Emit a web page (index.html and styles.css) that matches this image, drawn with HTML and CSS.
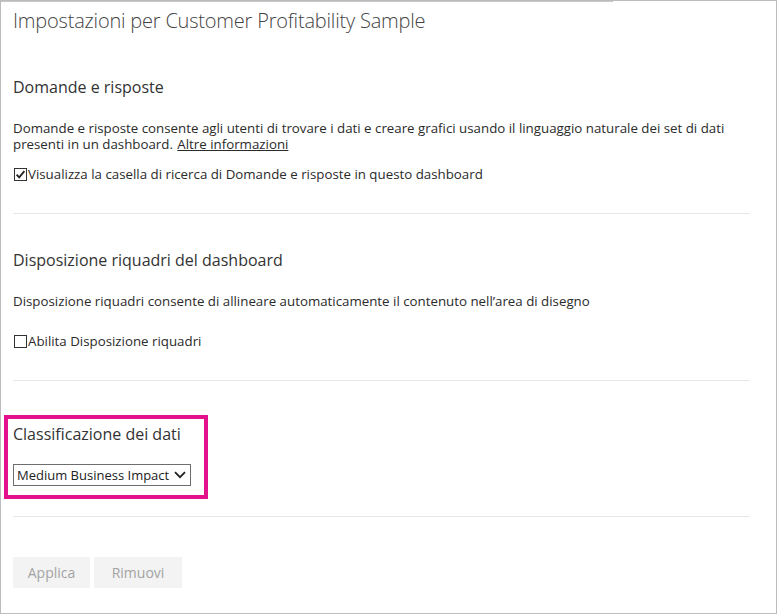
FILE: index.html
```html
<!DOCTYPE html>
<html lang="it">
<head>
<meta charset="utf-8">
<title>Impostazioni</title>
<link rel="stylesheet" href="styles.css">
</head>
<body>
<div class="frame">
  <h1 class="title">Impostazioni per Customer Profitability Sample</h1>

  <section class="section s1">
    <h2 class="heading">Domande e risposte</h2>
    <p class="para">Domande e risposte consente agli utenti di trovare i dati e creare grafici usando il linguaggio naturale dei set di dati presenti in un dashboard. <a class="link" href="#">Altre informazioni</a></p>
    <label class="check">
      <svg class="box" width="13" height="13" viewBox="0 0 13 13"><rect x="0.5" y="0.5" width="12" height="12" fill="#fff" stroke="#333"/><path d="M2.6 6.6 L5.2 9.4 L10.4 3.2" fill="none" stroke="#222" stroke-width="1.8"/></svg>
      <span>Visualizza la casella di ricerca di Domande e risposte in questo dashboard</span>
    </label>
  </section>
  <hr class="divider">

  <section class="section s2">
    <h2 class="heading">Disposizione riquadri del dashboard</h2>
    <p class="para p2">Disposizione riquadri consente di allineare automaticamente il contenuto nell’area di disegno</p>
    <label class="check c2">
      <svg class="box" width="13" height="13" viewBox="0 0 13 13"><rect x="0.5" y="0.5" width="12" height="12" fill="#fff" stroke="#333"/></svg>
      <span>Abilita Disposizione riquadri</span>
    </label>
  </section>
  <hr class="divider d2">

  <div class="highlight">
    <h2 class="heading h3">Classificazione dei dati</h2>
    <div class="select">
      <span>Medium Business Impact</span>
      <svg class="chev" width="12" height="8" viewBox="0 0 12 8"><path d="M1 1.2 L6 6.2 L11 1.2" fill="none" stroke="#222" stroke-width="1.8"/></svg>
    </div>
  </div>
  <hr class="divider d3">

  <div class="buttons">
    <button class="btn b1">Applica</button>
    <button class="btn b2">Rimuovi</button>
  </div>
</div>
</body>
</html>
```
FILE: styles.css
```css
* { box-sizing: border-box; }
html, body { margin: 0; padding: 0; background: #fff; }
body {
  font-family: "Open Sans", "Liberation Sans", sans-serif;
  color: #333;
}
.frame {
  position: relative;
  width: 777px;
  height: 614px;
  border: 1px solid #bcbcbc;
  padding: 6px 26px 0 12px;
  overflow: hidden;
}
.frame::before {
  content: "";
  position: absolute;
  left: 0;
  top: 0;
  width: 612px;
  height: 1px;
  background: #c8c8c8;
}
.title {
  margin: 0;
  font-size: 20px;
  line-height: 27px;
  font-weight: 300;
  color: #444;
  letter-spacing: -0.2px;
}
.heading {
  margin: 0;
  font-size: 16px;
  line-height: 20px;
  font-weight: 400;
  color: #333;
}
.s1 { margin-top: 43px; }
.para {
  margin: 23px 0 0;
  font-size: 13.3px;
  line-height: 16px;
  color: #2b2b2b;
}
.link {
  display: inline-block;
  line-height: 15px;
  margin-left: 1px;
  color: #2b2b2b;
  text-decoration: underline;
}
.check {
  display: flex;
  align-items: center;
  gap: 1px;
  margin-top: 14px;
  font-size: 13.3px;
  line-height: 16px;
  color: #2b2b2b;
}
.box { display: block; flex: none; margin-left: 1px; }
.divider {
  border: 0;
  height: 1px;
  background: #e6e6e6;
  margin: 31px 0 0;
}
.s2 { margin-top: 36px; }
.p2 { margin-top: 23px; }
.c2 { margin-top: 24px; }
.d2 { margin-top: 31px; }
.highlight {
  width: 204px;
  margin: 34px 0 0 -9px;
  border: 4px solid #e3118c;
  padding: 5px 0 9px 5px;
}
.h3 { font-size: 16px; }
.select {
  margin-top: 20px;
  width: 178px;
  height: 22px;
  border: 1px solid #6e6e6e;
  display: flex;
  align-items: center;
  justify-content: space-between;
  padding: 0 4px 0 3px;
  font-size: 13px;
  color: #222;
}
.chev { display: block; }
.d3 { margin-top: 17px; }
.buttons {
  display: flex;
  gap: 4px;
  margin-top: 40px;
}
.btn {
  border: 0;
  background: #f3f3f3;
  color: #a3a3a3;
  font-family: inherit;
  font-size: 14px;
  height: 31px;
  padding: 0;
}
.b1 { width: 77px; }
.b2 { width: 88px; }
```
